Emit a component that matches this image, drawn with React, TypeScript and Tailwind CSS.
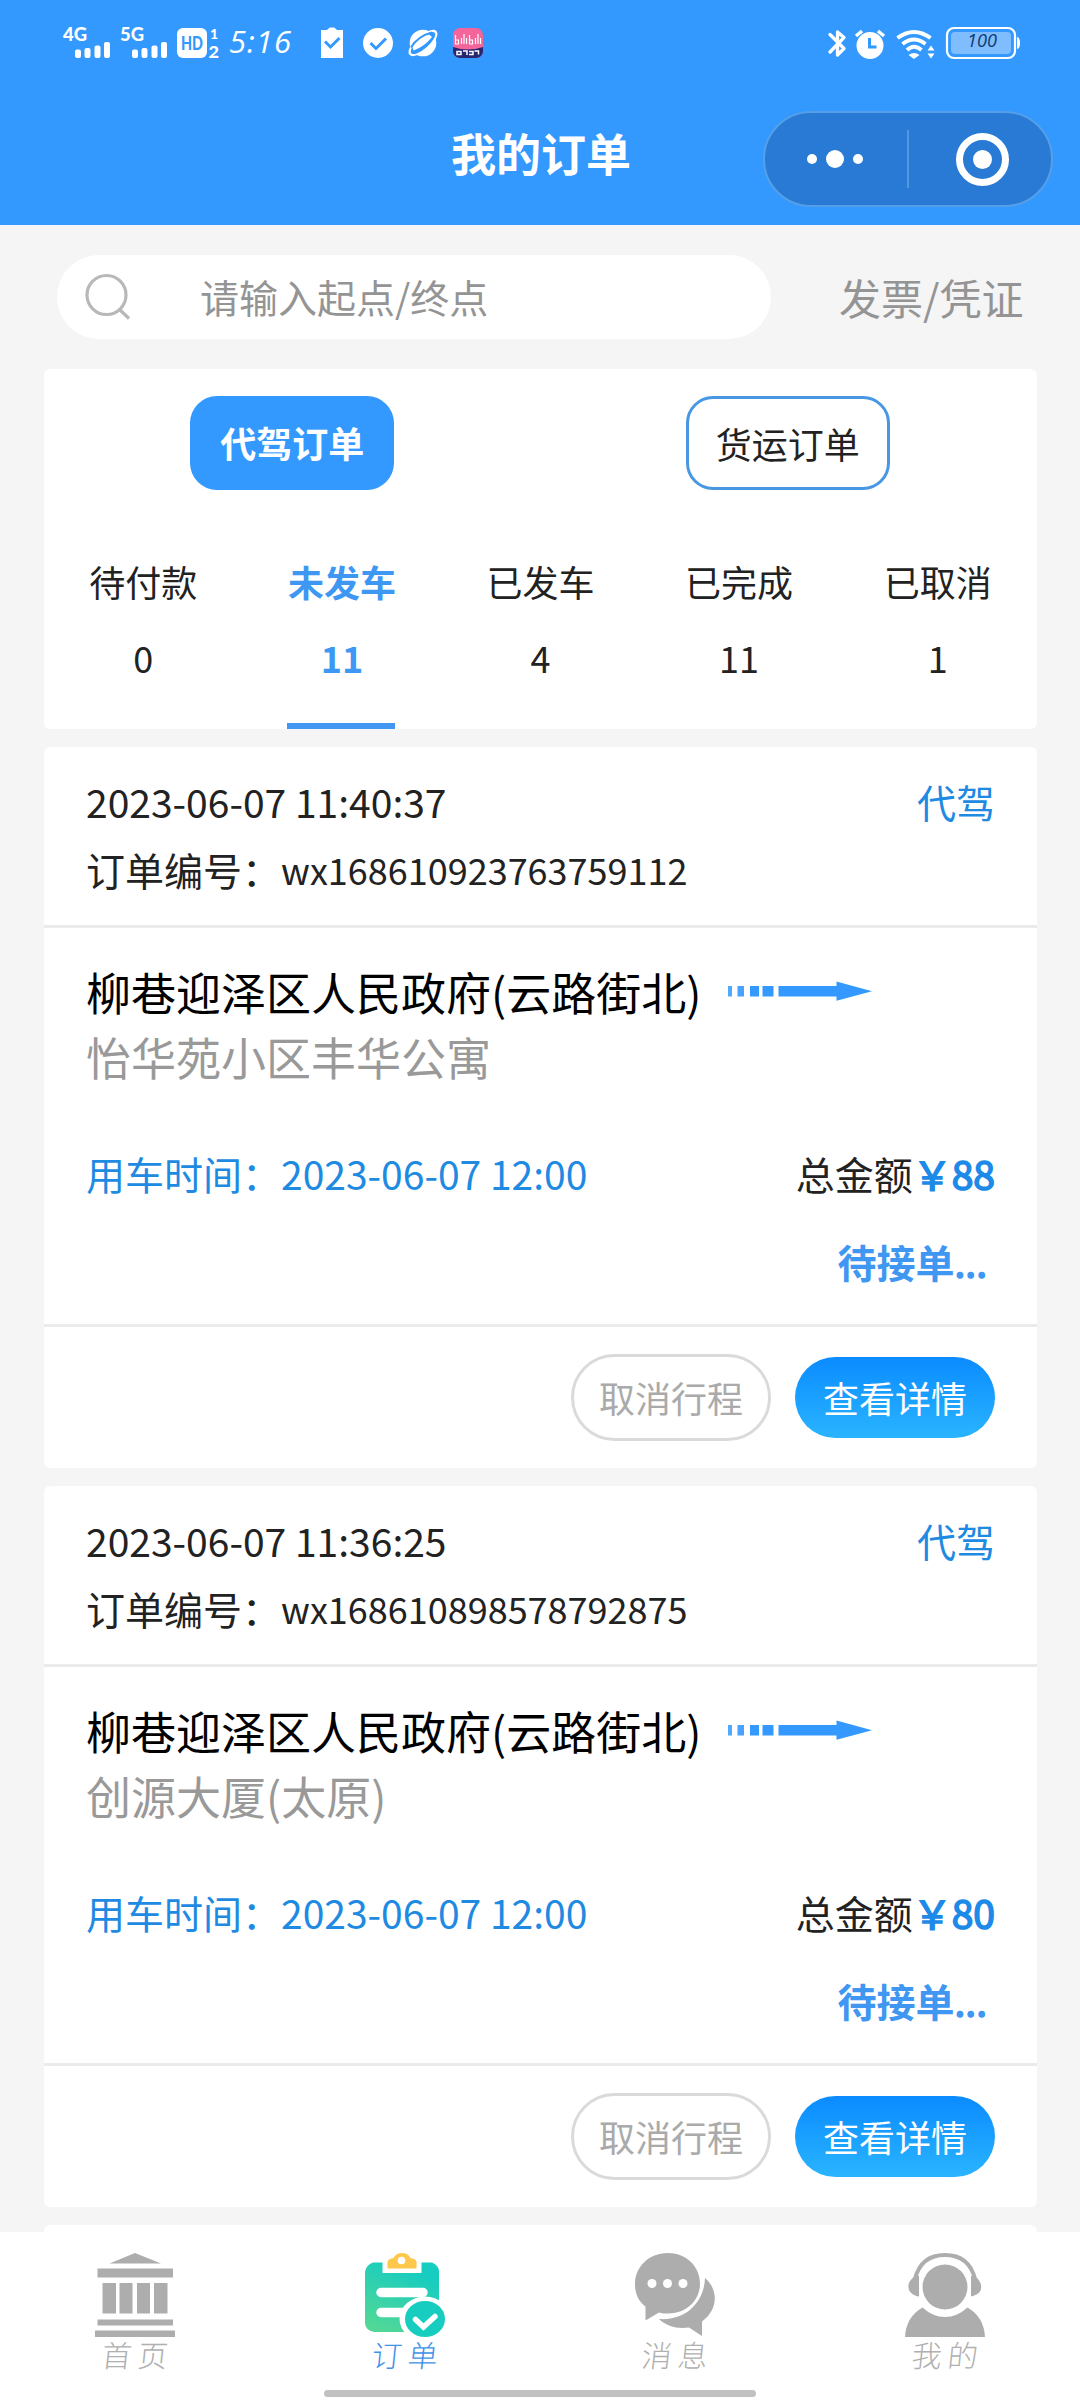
import React from "react";

const TABS = [
  { label: "待付款", count: 0 },
  { label: "未发车", count: 11, active: true },
  { label: "已发车", count: 4 },
  { label: "已完成", count: 11 },
  { label: "已取消", count: 1 },
];

const ORDERS = [
  { created: "2023-06-07 11:40:37", no: "wx168610923763759112", to: "怡华苑小区丰华公寓", price: "88" },
  { created: "2023-06-07 11:36:25", no: "wx168610898578792875", to: "创源大厦(太原)", price: "80" },
];

function Signal({ label }: { label: string }) {
  return (
    <svg className="h-[40px] w-[48px] shrink-0 overflow-visible" viewBox="0 -4 48 40" fill="#fff">
      <text x="0" y="14" fontSize="19" fontWeight="900" fontFamily="Lato" textLength="24" lengthAdjust="spacingAndGlyphs">{label}</text>
      <rect x="12" y="22.5" width="6" height="8.5" rx="2" />
      <rect x="21.5" y="21" width="6" height="10" rx="2" />
      <rect x="31.5" y="18.5" width="6" height="12.5" rx="2" />
      <rect x="41" y="15" width="6" height="16" rx="2" />
    </svg>
  );
}

function StatusBar() {
  return (
    <div className="flex h-[86px] items-center text-white">
      <div className="ml-[63px] flex shrink-0 gap-[9px]">
        <Signal label="4G" />
        <Signal label="5G" />
      </div>
      <svg className="ml-[9px] h-[40px] w-[44px] shrink-0 overflow-visible" viewBox="0 -4 44 40" fill="#fff">
        <rect x="0" y="1" width="30" height="30" rx="6" />
        <text x="4" y="22.500" fontSize="19" fontWeight="900" fontFamily="Lato" fill="#3399ff" textLength="22" lengthAdjust="spacingAndGlyphs">HD</text>
        <text x="33" y="12" fontSize="14" fontWeight="900" fontFamily="Lato">1</text>
        <text x="31.5" y="30.5" fontSize="16" fontWeight="900" fontFamily="Lato" textLength="10.5" lengthAdjust="spacingAndGlyphs">2</text>
      </svg>
      <span className="ml-[8px] w-[70px] shrink-0 -translate-y-[2px] font-['Open_Sans',sans-serif] text-[31px] leading-[40px] font-medium tracking-[1px] whitespace-nowrap italic">5:16</span>
      <svg className="ml-[22px] h-[32px] w-[166px] shrink-0" viewBox="0 0 166 32">
        <path d="M0 3h6c1-1 2-2.500 3.500-2.500h3c1.500 0 2.500 1.500 3.500 2.500h6v28H0z" fill="#fff" />
        <path d="M4 14.500l5.500 5.500 9-9" fill="none" stroke="#3399ff" strokeWidth="3" />
        <circle cx="57" cy="16" r="15" fill="#fff" />
        <path d="M49.500 16l5.500 5.500 10-10" fill="none" stroke="#3399ff" strokeWidth="3" />
        <circle cx="102" cy="16" r="13.300" fill="#fff" />
        <ellipse cx="102" cy="16" rx="18" ry="7.500" transform="rotate(-41 102 16)" fill="#fff" />
        <ellipse cx="102" cy="16" rx="15.500" ry="5.500" transform="rotate(-41 102 16)" fill="#3399ff" />
        <path d="M91 18Q95 9 107 6.500L111 10Q103 20 92.500 23.500z" fill="#fff" />
        <path d="M90 20.500Q97 9 111 5.500" fill="none" stroke="#3399ff" strokeWidth="2" />
        <rect x="132" y="1" width="30" height="30" rx="7" fill="#f3659b" />
        <path d="M132 20q15 5 30 0v4a7 7 0 0 1-7 7h-16a7 7 0 0 1-7-7z" fill="#26256e" />
        <path d="M134.500 8v9h3v-4h-3M140.500 11v6M143 7v10M145.500 11v6M148.500 8v9h3v-4h-3M154.500 11v6M157 7v10M159.500 11v6" fill="none" stroke="#fff" strokeWidth="1.200" />
        <path d="M136 24.500h4v3h-4zM142 24h4v4M148 24.500h4v3h-4M153.500 24h4v3.500" fill="none" stroke="#fff" strokeWidth="1.500" />
      </svg>
      <svg className="mr-[60px] ml-auto h-[34px] w-[193px] shrink-0" viewBox="827 25 193 34" fill="#fff">
        <path d="M830 33.500l14 14-6.500 6.500V31l6.500 5.500-14 14.500" fill="none" stroke="#fff" strokeWidth="3.300" strokeLinecap="round" strokeLinejoin="round" />
        <circle cx="870" cy="44.500" r="13.500" />
        <path d="M856 35l6-5M884 35l-6-5" stroke="#fff" strokeWidth="3.500" />
        <path d="M869.500 37v9h7" fill="none" stroke="#3399ff" strokeWidth="3" />
        <path d="M897.500 37q16.500-12 33 0" fill="none" stroke="#fff" strokeWidth="4" />
        <path d="M902.500 43q11.500-9 23 0M907 49q7-6.500 14.500 0" fill="none" stroke="#fff" strokeWidth="3.800" />
        <path d="M908.500 54q5.500-4 11 0l-5.500 4z" />
        <path d="M927.500 49.500l3.500-5 3.500 5zM927.500 52.500h7l-3.500 5z" />
        <rect x="947" y="27" width="68" height="30" rx="7" fill="none" stroke="#fff" strokeWidth="2.200" />
        <rect x="951" y="31" width="60" height="22" rx="4" fill="#7fbdff" />
        <path d="M1017 36c4 0 4 12 0 12z" />
        <text x="967" y="46" fontSize="19" fontFamily="Open Sans" fontStyle="italic" fill="#0f3b70" textLength="30" lengthAdjust="spacingAndGlyphs">100</text>
      </svg>
    </div>
  );
}

function Header() {
  return (
    <header className="h-[225px] shrink-0 bg-[#3399ff]">
      <StatusBar />
      <div className="relative flex h-[139px] justify-center">
        <h1 className="mt-[37px] pl-[2px] text-[45px] leading-[60px] font-bold text-white">我的订单</h1>
        <div className="absolute top-[25px] right-[27px] flex h-[96px] w-[290px] items-center rounded-full border-2 border-[#559fe8] bg-[#287ad4]">
          <div className="flex w-[142px] items-center justify-center gap-[9px] pr-[2px]">
            <i className="size-[10px] rounded-full bg-white" />
            <i className="size-[18px] rounded-full bg-white" />
            <i className="size-[10px] rounded-full bg-white" />
          </div>
          <div className="h-[58px] w-[2px] bg-[#5397de]" />
          <div className="flex flex-1 justify-center pl-[5px]">
            <div className="flex size-[53px] items-center justify-center rounded-full border-[7px] border-white">
              <i className="size-[19px] rounded-full bg-white" />
            </div>
          </div>
        </div>
      </div>
    </header>
  );
}

function SearchRow() {
  return (
    <div className="mt-[30px] flex h-[84px] shrink-0 items-center pl-[57px]">
      <div className="flex h-[84px] w-[714px] items-center rounded-full bg-white">
        <svg className="ml-[28px] size-[48px]" viewBox="0 0 48 48" fill="none" stroke="#b8b8b8" strokeWidth="3.200">
          <circle cx="21.500" cy="22" r="19.500" />
          <path d="M34.500 36.500l9.500 9" />
        </svg>
        <span className="mb-[2px] ml-[67px] text-[39px] leading-none text-[#949494]">请输入起点/终点</span>
      </div>
      <span className="ml-[68px] text-[42px] leading-none text-[#949494]">发票/凭证</span>
    </div>
  );
}

function Filters() {
  return (
    <section className="mx-[44px] mt-[30px] h-[360px] w-[993px] shrink-0 rounded-[6px] bg-white">
      <div className="flex h-[148px] pt-[27px]">
        <div className="flex w-1/2 justify-center">
          <button className="h-[94px] w-[204px] rounded-[27px] bg-[#3399ff] pb-[2px] text-[36px] leading-none font-bold text-white">代驾订单</button>
        </div>
        <div className="flex w-1/2 justify-center pr-[2px]">
          <button className="h-[94px] w-[204px] rounded-[27px] border-[3px] border-[#4797e3] text-[36px] leading-none text-[#222]">货运订单</button>
        </div>
      </div>
      <div className="flex h-[212px]">
        {TABS.map((t) => (
          <div
            key={t.label}
            className={
              t.active
                ? "flex flex-1 flex-col items-center text-[36px] leading-[50px] font-bold text-[#3e97f2]"
                : "flex flex-1 flex-col items-center text-[36px] leading-[50px] text-[#222]"
            }
          >
            <span className="mt-[39px]">{t.label}</span>
            <span className="mt-[26px]">{t.count}</span>
            {t.active && <span className="mt-auto mr-px h-[6px] w-[108px] bg-[#4197f2]" />}
          </div>
        ))}
      </div>
    </section>
  );
}

function RouteArrow() {
  return (
    <svg className="-mt-[3px] ml-[27px] h-[20px] w-[144px] shrink-0" viewBox="0 0 144 20" fill="#3399ff">
      <rect x="0" y="5" width="4" height="10.500" opacity=".85" />
      <rect x="9.500" y="5" width="6.500" height="10.500" opacity=".9" />
      <rect x="22" y="5" width="9" height="10.500" />
      <rect x="34.500" y="5" width="11" height="10.500" />
      <path d="M50.500 5h58V.5L144 10.200l-35.500 9.500V15.500h-58z" />
    </svg>
  );
}

function OrderCard({ created, no, to, price }: (typeof ORDERS)[number]) {
  return (
    <article className="mx-[44px] mt-[18px] h-[721px] w-[993px] shrink-0 rounded-[6px] bg-white text-[39px] text-[#222]">
      <div className="h-[181px] border-b-[3px] border-[#ebebeb] pt-[24px] pr-[42px] pl-[42px]">
        <div className="flex h-[60px] items-center justify-between leading-[60px]">
          <span>{created}</span>
          <span className="text-[#1e8ae2]">代驾</span>
        </div>
        <div className="mt-[8px] flex h-[60px] items-center leading-[60px]">
          <span>订单编号：</span>
          <span className="text-[36px]">{no}</span>
        </div>
      </div>
      <div className="flex h-[399px] flex-col border-b-[3px] border-[#ebebeb] pr-[42px] pl-[42px]">
        <div className="mt-[31px] flex h-[66px] items-center text-[45px] leading-[66px] text-black">
          柳巷迎泽区人民政府(云路街北)
          <RouteArrow />
        </div>
        <div className="-mt-px h-[66px] text-[45px] leading-[66px] text-[#999]">{to}</div>
        <div className="mt-[53px] flex h-[60px] items-center justify-between leading-[60px]">
          <span className="text-[#1e8ae2]">用车时间：2023-06-07 12:00</span>
          <span>
            总金额<span className="text-[#1e8ae8] [-webkit-text-stroke:1.6px_#1e8ae8]">￥{price}</span>
          </span>
        </div>
        <div className="mt-[28px] mr-[8px] text-right leading-[60px] text-[#4097f2]">
          <span className="font-bold">待接单</span>
          <span className="[-webkit-text-stroke:1.6px_#4097f2]">...</span>
        </div>
      </div>
      <div className="flex h-[141px] items-center justify-end gap-[24px] pr-[42px] text-[36px] leading-none">
        <button className="h-[87px] w-[200px] rounded-full border-[3px] border-[#dadada] pb-[2px] text-[#aaa]">取消行程</button>
        <button className="h-[81px] w-[200px] rounded-full bg-linear-to-b from-[#0b8bff] to-[#2ab4ff] pb-[2px] text-white">查看详情</button>
      </div>
    </article>
  );
}

function HomeIcon() {
  return (
    <svg className="h-[84px] w-[80px]" viewBox="0 0 80 84" fill="#adadad">
      <path d="M14.500 10.500L40 0l26 10.500z" />
      <path d="M2.500 15.500h75.500v9H2.500zM7.500 30H21v30.500H7.500zM24.500 30h13v30.500h-13zM42 30h13v30.500H42zM59 30h13.500v30.500H59zM2.500 66.500h75.500v6H2.500zM0 77.500h80V84H0z" />
    </svg>
  );
}

function OrdersIcon() {
  return (
    <svg className="h-[84px] w-[80px]" viewBox="0 0 80 84">
      <defs>
        <linearGradient id="board" x1=".7" y1="0" x2=".2" y2="1">
          <stop offset=".1" stopColor="#17ccc0" />
          <stop offset="1" stopColor="#52d896" />
        </linearGradient>
      </defs>
      <path d="M8 9.500h9.500V20h39V9.500H67q7 3 7 9V79H9Q0 77 0 70V19q1-7 8-9.500z" fill="url(#board)" />
      <path d="M22.500 15.500v-7q1-3 6-3.500Q31 0 37 0t8.500 5q5 .5 6 3.500v7z" fill="#fec84c" />
      <circle cx="36.500" cy="7.500" r="3.800" fill="#fff" />
      <path d="M16 39.500h42M16 59.500h26" stroke="#fff" strokeWidth="9.500" strokeLinecap="round" />
      <ellipse cx="60" cy="66" rx="25.500" ry="22.500" fill="#fff" />
      <ellipse cx="60" cy="66" rx="20" ry="18" fill="#17cdc0" />
      <path d="M50.500 66.500l8 7.500L70 63.500" fill="none" stroke="#fff" strokeWidth="5.500" strokeLinecap="round" />
    </svg>
  );
}

function MessageIcon() {
  return (
    <svg className="h-[84px] w-[80px]" viewBox="0 0 80 84" fill="#adadad">
      <path d="M70 25c14 12 13 32-3 43.500V83L54 74.500c-12 1.500-22-1-30-8.500 25 2 45-15 46-41z" />
      <path d="M32.500 0C51 0 65 13 65 30.500S51 60.500 33 60.500c-4 0-6 0-9-1L10.500 67.500V53.500C3 48 0 40 0 31 0 14 14 0 32.500 0z" />
      <g fill="#fff"><circle cx="17" cy="30.500" r="4.500" /><circle cx="32.500" cy="30.500" r="4.500" /><circle cx="48" cy="30.500" r="4.500" /></g>
    </svg>
  );
}

function ProfileIcon() {
  return (
    <svg className="h-[84px] w-[80px]" viewBox="0 0 80 84" fill="#adadad">
      <circle cx="40" cy="34" r="22.500" />
      <path d="M10 26Q16 2 40 2t30 24" fill="none" stroke="#adadad" strokeWidth="4" />
      <path d="M14 23v20.500C6 42 3 38 3.500 32c.5-4 4-7 6.500-9zM66 23v20.500C74 42 77 38 76 32c-.5-4-4-7-6-9z" />
      <path d="M17.500 54.500Q28 64 40 64t22.500-9.500Q79 64 80 84H0q1-20 17.500-29.500z" />
    </svg>
  );
}

const NAV = [
  { label: "首页", icon: <HomeIcon /> },
  { label: "订单", icon: <OrdersIcon />, active: true },
  { label: "消息", icon: <MessageIcon /> },
  { label: "我的", icon: <ProfileIcon /> },
];

export default function App() {
  return (
    <div className="flex h-[2400px] w-[1080px] flex-col overflow-hidden bg-[#f5f5f5] font-['Noto_Sans_CJK_SC',sans-serif]">
      <Header />
      <SearchRow />
      <Filters />
      {ORDERS.map((o) => (
        <OrderCard key={o.no} {...o} />
      ))}
      <div className="mx-[44px] mt-[18px] h-[7px] w-[993px] shrink-0 rounded-t-[6px] bg-white" />
      <nav className="flex h-[168px] shrink-0 flex-col items-center bg-white">
        <div className="flex h-[158px] w-full">
          {NAV.map((n) => (
            <div key={n.label} className="flex flex-1 flex-col items-center pt-[21px]">
              {n.icon}
              <span
                className={
                  n.active
                    ? "-mt-[2px] -skew-x-6 pl-[6px] text-[30px] leading-[38px] font-light tracking-[6px] text-[#3f93e6]"
                    : "-mt-[2px] -skew-x-6 pl-[6px] text-[30px] leading-[38px] font-light tracking-[6px] text-[#b0b0b0]"
                }
              >
                {n.label}
              </span>
            </div>
          ))}
        </div>
        <div className="h-[7px] w-[432px] rounded-full bg-[#c1c1c1]" />
      </nav>
    </div>
  );
}
